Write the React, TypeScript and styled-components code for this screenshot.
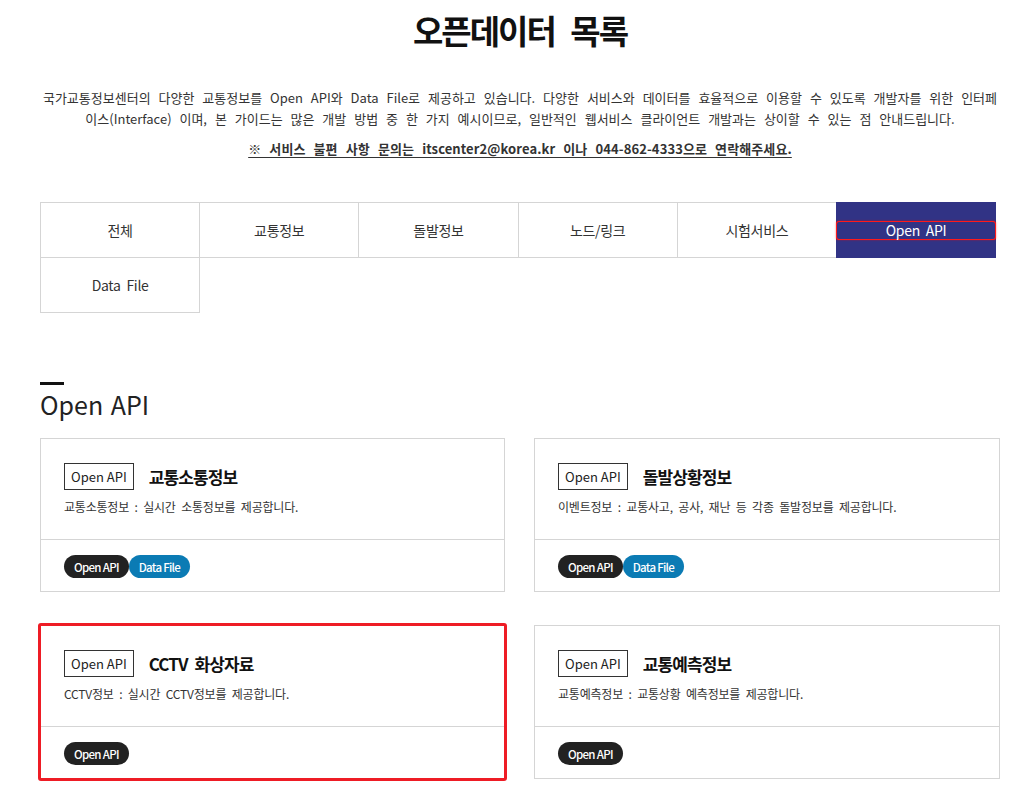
import React from "react";
import styled, { createGlobalStyle } from "styled-components";

const GlobalStyle = createGlobalStyle`
  * { box-sizing: border-box; }
  body {
    margin: 0;
    background: #fff;
    color: #333;
    font-family: "Noto Sans CJK KR", "Noto Sans", sans-serif;
  }
`;

interface Item {
  id: number;
  title: string;
  desc: string;
  types: string[];
}

const tabs = ["전체", "교통정보", "돌발정보", "노드/링크", "시험서비스", "Open API", "Data File"];

const items: Item[] = [
  { id: 1, title: "교통소통정보", desc: "교통소통정보 : 실시간 소통정보를 제공합니다.", types: ["Open API", "Data File"] },
  { id: 2, title: "돌발상황정보", desc: "이벤트정보 : 교통사고, 공사, 재난 등 각종 돌발정보를 제공합니다.", types: ["Open API", "Data File"] },
  { id: 3, title: "CCTV 화상자료", desc: "CCTV정보 : 실시간 CCTV정보를 제공합니다.", types: ["Open API"] },
  { id: 4, title: "교통예측정보", desc: "교통예측정보 : 교통상황 예측정보를 제공합니다.", types: ["Open API"] },
];

const App: React.FC = () => {
  return (
    <>
      <GlobalStyle />
      <Page>
        <Title>오픈데이터 목록</Title>
        <Intro>
          국가교통정보센터의 다양한 교통정보를 Open API와 Data File로 제공하고 있습니다. 다양한 서비스와 데이터를 효율적으로 이용할 수 있도록 개발자를 위한 인터페이스(Interface) 이며, 본 가이드는 많은 개발 방법 중 한 가지 예시이므로, 일반적인 웹서비스 클라이언트 개발과는 상이할 수 있는 점 안내드립니다.
        </Intro>
        <Notice>※ 서비스 불편 사항 문의는 itscenter2@korea.kr 이나 044-862-4333으로 연락해주세요.</Notice>

        <TabGrid>
          {tabs.map((t) => (
            <Tab key={t} active={t === "Open API"}>
              <TabLink focused={t === "Open API"}>{t}</TabLink>
            </Tab>
          ))}
        </TabGrid>

        <SectionTitle>Open API</SectionTitle>

        <CardGrid>
          {items.map((it) => (
            <Card key={it.id} selected={it.id === 3}>
              <CardBody>
                <CardHead>
                  <TypeBox>Open API</TypeBox>
                  <CardTitle>{it.title}</CardTitle>
                </CardHead>
                <CardDesc>{it.desc}</CardDesc>
              </CardBody>
              <CardFoot>
                {it.types.map((ty) => (
                  <Badge key={ty} kind={ty === "Open API" ? "api" : "file"}>{ty}</Badge>
                ))}
              </CardFoot>
            </Card>
          ))}
        </CardGrid>
      </Page>
    </>
  );
};

export default App;

const Page = styled.div`
  width: 960px;
  margin-left: 40px;
  padding-top: 10px;
  padding-bottom: 40px;
`;

const Title = styled.h1`
  margin: 0;
  text-align: center;
  font-size: 33px;
  line-height: 40px;
  font-weight: 700;
  color: #111;
  letter-spacing: -2px;
  word-spacing: 10px;
`;

const Intro = styled.p`
  margin: 37px 0 0;
  text-align: center;
  font-size: 13px;
  line-height: 21px;
  color: #333;
  letter-spacing: 0;
  word-spacing: 5px;
`;

const Notice = styled.p`
  margin: 9px 0 0;
  text-align: center;
  font-size: 13px;
  line-height: 21px;
  font-weight: 700;
  color: #333;
  text-decoration: underline;
  text-underline-offset: 3px;
  letter-spacing: 0.1px;
  word-spacing: 5px;
`;

const TabGrid = styled.div`
  margin-top: 43px;
  display: grid;
  grid-template-columns: repeat(6, 159.2px);
`;

const Tab = styled.div<{ active?: boolean }>`
  height: 56px;
  display: flex;
  align-items: center;
  justify-content: center;
  border: 1px solid #d5d5d5;
  margin: 0 -1px -1px 0;
  background: ${({ active }) => (active ? "#313385" : "#fff")};
  border-color: ${({ active }) => (active ? "#313385" : "#d5d5d5")};
  color: ${({ active }) => (active ? "#fff" : "#333")};
  font-size: 14px;
  letter-spacing: -0.3px;
  word-spacing: 3px;
`;

const TabLink = styled.span<{ focused?: boolean }>`
  display: block;
  width: 100%;
  text-align: center;
  line-height: 17px;
  border-radius: 2px;
  ${({ focused }) => (focused ? "box-shadow: 0 0 0 1px #ff1a1a, 0 0 2px 1px rgba(255,0,0,0.6);" : "")}
`;

const SectionTitle = styled.h2`
  margin: 70px 0 0;
  font-size: 25px;
  line-height: 32px;
  font-weight: 400;
  color: #222;
  word-spacing: 2px;
  &::before {
    content: "";
    display: block;
    width: 24px;
    height: 3px;
    background: #111;
    margin-bottom: 3px;
  }
`;

const CardGrid = styled.div`
  margin-top: 18px;
  display: grid;
  grid-template-columns: 465px 466px;
  column-gap: 29px;
  row-gap: 33px;
`;

const Card = styled.div<{ selected?: boolean }>`
  border: 1px solid #d5d5d5;
  background: #fff;
  ${({ selected }) => (selected ? "outline: 3px solid #ee1c25; outline-offset: -1px; border-radius: 1px;" : "")}
`;

const CardBody = styled.div`
  padding: 24px 23px 23px;
  border-bottom: 1px solid #d5d5d5;
`;

const CardHead = styled.div`
  display: flex;
  align-items: center;
  gap: 15px;
`;

const TypeBox = styled.span`
  display: inline-flex;
  align-items: center;
  height: 27px;
  padding: 0 6px;
  border: 1px solid #333;
  font-size: 13px;
  color: #222;
`;

const CardTitle = styled.h3`
  margin: 0;
  font-size: 17px;
  font-weight: 700;
  color: #111;
  letter-spacing: -0.9px;
  word-spacing: 4px;
`;

const CardDesc = styled.p`
  margin: 8px 0 0;
  font-size: 12px;
  line-height: 18px;
  color: #333;
  letter-spacing: -0.2px;
  word-spacing: 3px;
`;

const CardFoot = styled.div`
  display: flex;
  padding: 15px 23px 13px;
`;

const Badge = styled.span<{ kind: "api" | "file" }>`
  display: inline-flex;
  align-items: center;
  height: 23px;
  padding: 0 10px;
  border-radius: 12px;
  background: ${({ kind }) => (kind === "api" ? "#222" : "#0b7bb4")};
  color: #fff;
  font-size: 11.5px;
  font-weight: 500;
  letter-spacing: -0.7px;
`;
